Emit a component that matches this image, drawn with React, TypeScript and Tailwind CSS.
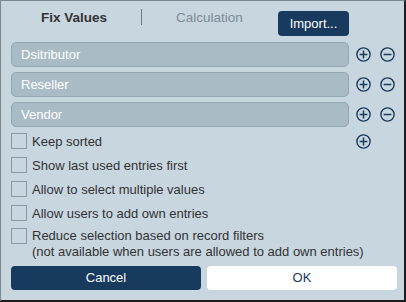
import React from "react";

const PlusIcon = () => (
  <svg width="15" height="15" viewBox="0 0 15 15" className="shrink-0">
    <circle cx="7.5" cy="7.5" r="6.6" fill="none" stroke="#1d3a5a" strokeWidth="1.4" />
    <path d="M7.5 3.6V11.4M3.6 7.5H11.4" stroke="#1d3a5a" strokeWidth="1.5" />
  </svg>
);

const MinusIcon = () => (
  <svg width="15" height="15" viewBox="0 0 15 15" className="shrink-0">
    <circle cx="7.5" cy="7.5" r="6.6" fill="none" stroke="#1d3a5a" strokeWidth="1.4" />
    <path d="M3.6 7.5H11.4" stroke="#1d3a5a" strokeWidth="1.5" />
  </svg>
);

const values = ["Dsitributor", "Reseller", "Vendor"];

const options = [
  "Keep sorted",
  "Show last used entries first",
  "Allow to select multiple values",
  "Allow users to add own entries",
];

export default function App() {
  return (
    <div
      className="w-[406px] h-[302px] bg-[#c8d6e0] border-l border-t border-l-[#7d8990] border-t-[#7d8990] border-r-2 border-b-2 border-r-[#1c1c1c] border-b-[#1c1c1c] pt-[10px] pl-[10px] text-[13px] text-[#333]"
      style={{ fontFamily: '"Liberation Sans", Arial, sans-serif' }}
    >
      {/* Tabs */}
      <div className="flex items-start h-[25px]">
        <span className="ml-[30px] w-[100px] -mt-[1px] leading-[15px] text-[13.5px] font-bold text-[#333]">Fix Values</span>
        <span className="-mt-[2px] w-px h-[16px] bg-[#6f7d87]"></span>
        <span className="ml-[34px] w-[102px] -mt-[1px] leading-[15px] text-[13.5px] text-[#7d8b96]">Calculation</span>
        <button className="w-[71px] h-[25px] rounded-[4px] bg-[#183a5e] text-white leading-[15px]">
          Import...
        </button>
      </div>

      {/* Values */}
      <div className="flex flex-col gap-[5px] mt-[6px]">
        {values.map((v) => (
          <div key={v} className="flex items-center">
            <div className="w-[338px] h-[25px] rounded-[5px] bg-[#a9bcc6] border border-[#93a7b2] pl-[9px] flex items-center text-white">
              {v}
            </div>
            <div className="ml-[7px]"><PlusIcon /></div>
            <div className="ml-[9px]"><MinusIcon /></div>
          </div>
        ))}
      </div>

      {/* Options */}
      <div className="flex flex-col mt-[2px]">
        {options.map((o, i) => (
          <div key={o} className="flex items-center h-[24px]">
            <span className="w-[16px] h-[16px] border border-[#8b9aa4] shrink-0"></span>
            <span className="ml-[5px] leading-[15px]">{o}</span>
            {i === 0 && (
              <div className="ml-auto mr-[33px]"><PlusIcon /></div>
            )}
          </div>
        ))}
        <div className="flex items-start pt-[3px]">
          <span className="w-[16px] h-[16px] border border-[#8b9aa4] shrink-0"></span>
          <span className="ml-[5px] leading-[16px]">
            Reduce selection based on record filters
            <br />
            (not available when users are allowed to add own entries)
          </span>
        </div>
      </div>

      {/* Buttons */}
      <div className="flex gap-[6px] mt-[6px]">
        <button className="w-[190px] h-[24px] rounded-[4px] bg-[#183a5e] text-white">Cancel</button>
        <button className="w-[190px] h-[24px] rounded-[4px] bg-white text-[#1d3a5a]">OK</button>
      </div>
    </div>
  );
}
